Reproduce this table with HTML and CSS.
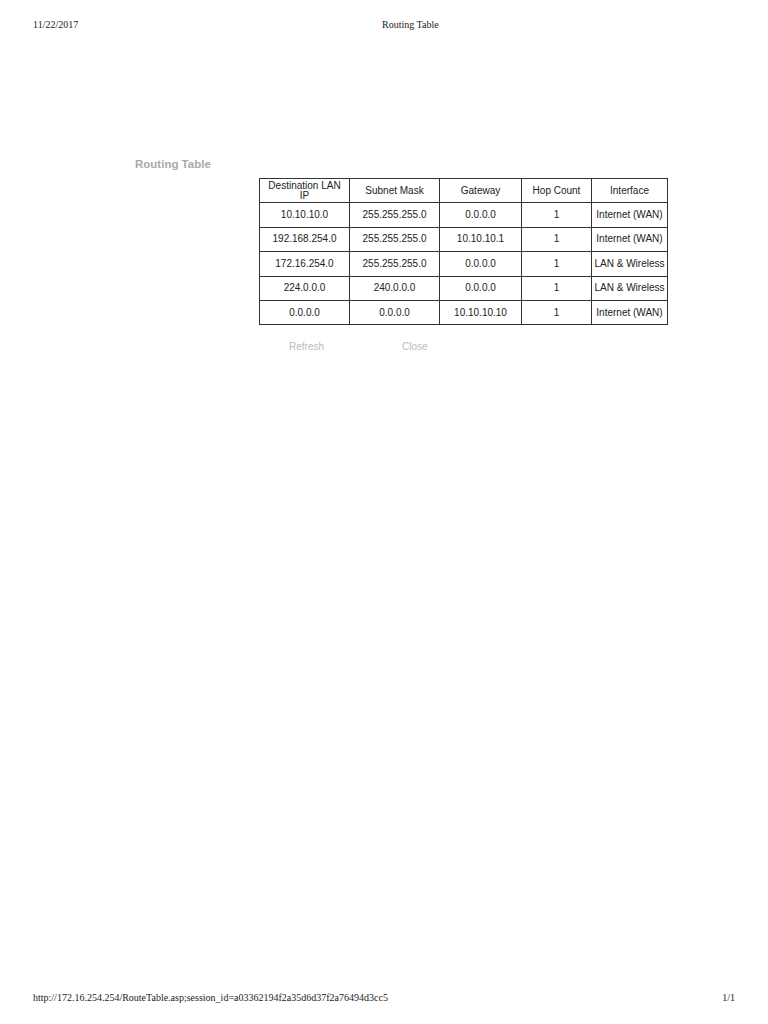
FILE: index.html
```html
<!DOCTYPE html>
<html>
<head>
<meta charset="utf-8">
<link rel="stylesheet" href="styles.css">
</head>
<body>
<div class="page">
  <header class="print-head">
    <span class="date">11/22/2017</span>
    <span class="doc-title">Routing Table</span>
  </header>
  <main class="content">
    <h1 class="title">Routing Table</h1>
    <table class="routes">
      <colgroup>
        <col class="c1"><col class="c2"><col class="c3"><col class="c4"><col class="c5">
      </colgroup>
      <tr class="head">
        <td class="wrap">Destination LAN IP</td><td>Subnet Mask</td><td>Gateway</td><td>Hop Count</td><td>Interface</td>
      </tr>
      <tr><td>10.10.10.0</td><td>255.255.255.0</td><td>0.0.0.0</td><td>1</td><td>Internet (WAN)</td></tr>
      <tr><td>192.168.254.0</td><td>255.255.255.0</td><td>10.10.10.1</td><td>1</td><td>Internet (WAN)</td></tr>
      <tr><td>172.16.254.0</td><td>255.255.255.0</td><td>0.0.0.0</td><td>1</td><td>LAN &amp; Wireless</td></tr>
      <tr><td>224.0.0.0</td><td>240.0.0.0</td><td>0.0.0.0</td><td>1</td><td>LAN &amp; Wireless</td></tr>
      <tr><td>0.0.0.0</td><td>0.0.0.0</td><td>10.10.10.10</td><td>1</td><td>Internet (WAN)</td></tr>
    </table>
    <div class="actions">
      <span class="btn">Refresh</span>
      <span class="btn">Close</span>
    </div>
  </main>
  <footer class="print-foot">
    <span class="url">http://172.16.254.254/RouteTable.asp;session_id=a03362194f2a35d6d37f2a76494d3cc5</span>
    <span class="pages">1/1</span>
  </footer>
</div>
</body>
</html>
```
FILE: styles.css
```css
html, body {
  margin: 0;
  padding: 0;
  background: #fff;
}
.page {
  min-height: 1024px;
  display: flex;
  flex-direction: column;
  box-sizing: border-box;
}
.print-head {
  display: flex;
  padding: 19px 0 0 33px;
  font-family: "Liberation Serif", serif;
  font-size: 10px;
  color: #222;
  height: 14px;
}
.print-head .date {
  width: 349px;
}
.content {
  flex: 1;
  padding-top: 124px;
  font-family: "Liberation Sans", Arial, sans-serif;
}
.title {
  margin: 0 0 0 135px;
  font-size: 11.5px;
  font-weight: bold;
  color: #aaa;
  line-height: 14px;
  height: 14px;
}
.routes {
  margin: 7px 0 0 259px;
  border-collapse: collapse;
  font-size: 10px;
  color: #222;
  table-layout: fixed;
  width: 408px;
}
.routes col.c1 { width: 90px; }
.routes col.c2 { width: 90px; }
.routes col.c3 { width: 82px; }
.routes col.c4 { width: 70px; }
.routes col.c5 { width: 76px; }
.routes td {
  border: 1px solid #333;
  text-align: center;
  height: 23.4px;
  padding: 0 1px;
  line-height: 10px;
  white-space: nowrap;
  vertical-align: middle;
}
.routes td.wrap {
  white-space: normal;
  padding: 0 3px;
}
.actions {
  display: flex;
  margin: 16px 0 0 289px;
  font-size: 10px;
  color: #bbb;
}
.actions .btn:first-child {
  width: 113px;
}
.print-foot {
  display: flex;
  justify-content: space-between;
  padding: 0 33px 21px 33px;
  font-family: "Liberation Serif", serif;
  font-size: 10px;
  color: #222;
}
```
